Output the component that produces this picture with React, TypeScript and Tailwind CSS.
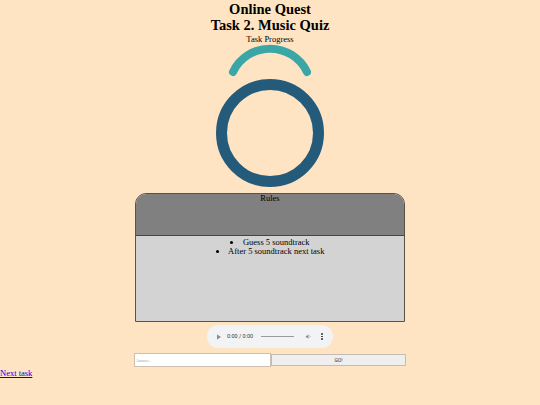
import React from "react";

function ProgressArc() {
  return (
    <svg width="96" height="34" viewBox="0 0 96 34" className="block">
      <path
        d="M 11 28 A 41 41 0 0 1 85 28"
        fill="none"
        stroke="#3aa6a6"
        strokeWidth="8"
        strokeLinecap="round"
      />
    </svg>
  );
}

function Ring() {
  return (
    <svg width="110" height="110" viewBox="0 0 110 110" className="block">
      <circle cx="55" cy="55" r="48.5" fill="none" stroke="#245b7b" strokeWidth="11" />
    </svg>
  );
}

function AudioBar() {
  return (
    <div className="flex h-[23px] w-[126px] items-center rounded-full bg-[#f1f3f4] pl-[9px] pr-[9px] text-[5.5px] text-[#3c3c3c]">
      <svg width="6" height="6" viewBox="0 0 6 6" className="mr-[5px]">
        <path d="M1 0.5 L5 3 L1 5.5 Z" fill="#8a8a8a" />
      </svg>
      <span className="whitespace-nowrap" style={{ fontFamily: "Roboto, sans-serif" }}>0:00 / 0:00</span>
      <div className="ml-[8px] h-[1px] w-[33px] bg-[#9a9a9a]" />
      <svg width="7" height="7" viewBox="0 0 24 24" className="ml-[11px]">
        <path d="M3 9v6h4l5 5V4L7 9H3z" fill="#8a8a8a" />
        <path d="M16 8.5a5 5 0 0 1 0 7" stroke="#8a8a8a" strokeWidth="2" fill="none" />
      </svg>
      <div className="ml-[9px] flex flex-col gap-[1px]">
        <span className="block h-[1.5px] w-[1.5px] rounded-full bg-[#333]" />
        <span className="block h-[1.5px] w-[1.5px] rounded-full bg-[#333]" />
        <span className="block h-[1.5px] w-[1.5px] rounded-full bg-[#333]" />
      </div>
    </div>
  );
}

export default function App() {
  return (
    <div
      className="min-h-[405px] w-full bg-[#ffe4c4] text-black"
      style={{ fontFamily: '"Liberation Serif", "Times New Roman", serif' }}
    >
      <div className="flex flex-col items-center">
        <h1 className="pt-[1px] text-center text-[14.5px] font-bold leading-[16px]">
          Online Quest
          <br />
          Task 2. Music Quiz
        </h1>
        <p className="mt-[1px] text-[8.5px] leading-[10px]">Task Progress</p>
        <ProgressArc />
        <Ring />
        <div className="mt-[5px] w-[270px] overflow-hidden rounded-t-[11px] border border-[#5a514c]">
          <div className="h-[42px] border-b border-[#4a4440] bg-[#808080] text-center text-[8.5px] leading-[9px]">
            Rules
          </div>
          <ul className="h-[85px] list-inside list-disc bg-[#d3d3d3] pt-[2px] text-center text-[8.5px] leading-[9px]">
            <li>Guess 5 soundtrack</li>
            <li>After 5 soundtrack next task</li>
          </ul>
        </div>
        <div className="mt-[3px]">
          <AudioBar />
        </div>
        <div className="mt-[5px] flex w-[272px] items-center">
          <input
            placeholder="Answer..."
            className="h-[14px] w-[137px] border border-[#cdbfae] bg-white px-[1px] text-[4px] outline-none placeholder:text-[#9a9a9a]"
          />
          <button className="h-[12px] flex-1 border border-[#c4bcb4] bg-[#efefef] text-[5px] leading-[10px] text-[#333]" style={{ fontFamily: "Roboto, sans-serif" }}>
            GO!
          </button>
        </div>
      </div>
      <a href="#" className="mt-[1px] block text-[8.5px] leading-[10px] text-[#0000ee] underline">
        Next task
      </a>
    </div>
  );
}
